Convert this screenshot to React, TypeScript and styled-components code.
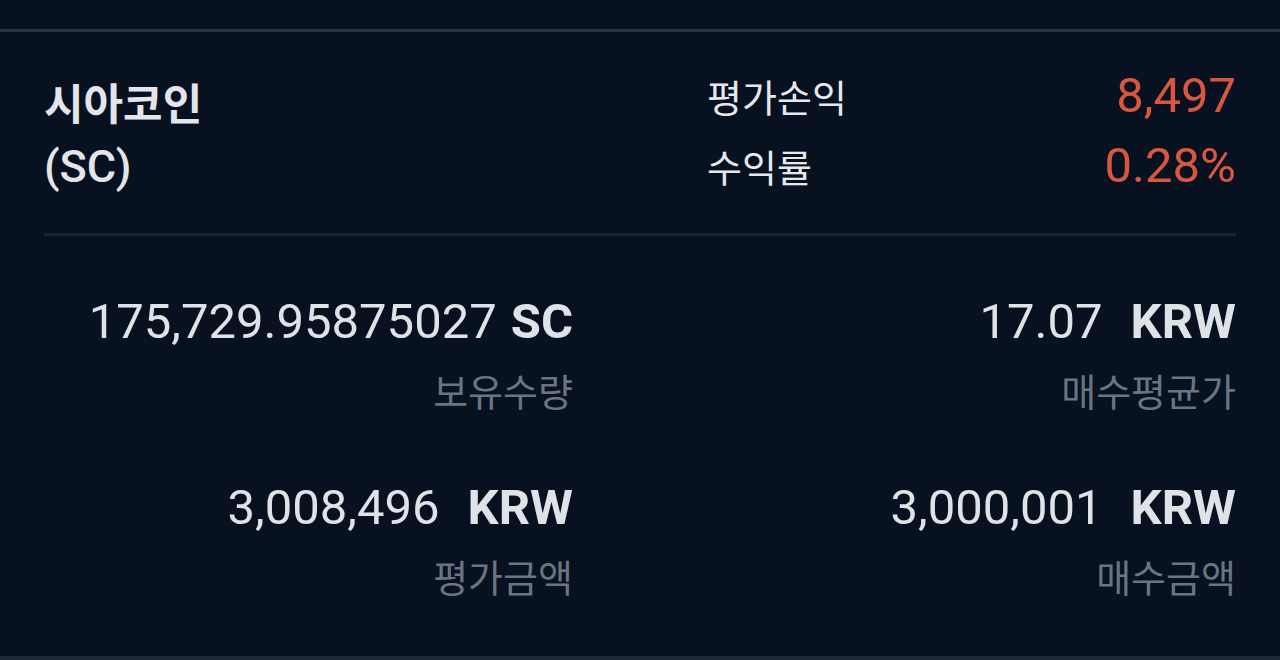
import React from 'react';
import styled, { createGlobalStyle } from 'styled-components';

const GlobalStyle = createGlobalStyle`
  html, body {
    margin: 0;
    padding: 0;
    background: #07111f;
  }
  body {
    font-family: Roboto, "Noto Sans CJK KR", sans-serif;
    -webkit-font-smoothing: antialiased;
  }
`;

type Holding = {
  value: string;
  unit: string;
  label: string;
  wide?: boolean;
};

const holdings: Holding[] = [
  { value: '175,729.95875027', unit: 'SC', label: '보유수량' },
  { value: '17.07', unit: 'KRW', label: '매수평균가', wide: true },
  { value: '3,008,496', unit: 'KRW', label: '평가금액', wide: true },
  { value: '3,000,001', unit: 'KRW', label: '매수금액', wide: true },
];

export default function App() {
  return (
    <>
      <GlobalStyle />
      <Screen>
        <TopBar />
        <Content>
          <Header>
            <CoinName>
              <KoName>시아코인</KoName>
              <Ticker>(SC)</Ticker>
            </CoinName>
            <Stats>
              <StatLabel>평가손익</StatLabel>
              <StatValue>8,497</StatValue>
              <StatLabel>수익률</StatLabel>
              <StatValue>0.28%</StatValue>
            </Stats>
          </Header>
          <Grid>
            {holdings.map((h) => (
              <Cell key={h.label}>
                <Amount>
                  {h.value}
                  <Unit wide={h.wide}>{h.unit}</Unit>
                </Amount>
                <CellLabel>{h.label}</CellLabel>
              </Cell>
            ))}
          </Grid>
        </Content>
      </Screen>
    </>
  );
}

const Screen = styled.div`
  height: 660px;
  display: flex;
  flex-direction: column;
  background: #07111f;
  border-bottom: 4px solid #1f2936;
  box-sizing: border-box;
  overflow: hidden;
`;

const TopBar = styled.div`
  height: 29px;
  flex-shrink: 0;
  border-bottom: 3px solid #283240;
`;

const Content = styled.div`
  flex: 1;
  padding: 0 44px;
`;

const Header = styled.div`
  display: grid;
  grid-template-columns: 1fr 1fr;
  column-gap: 134px;
  align-items: start;
  padding: 28px 0 33px;
  border-bottom: 3px solid #1a2431;
`;

const CoinName = styled.div`
  display: flex;
  flex-direction: column;
  padding-top: 14px;
  color: #e3e5ea;
`;

const KoName = styled.div`
  font-size: 43px;
  font-weight: 700;
  line-height: 62px;
`;

const Ticker = styled.div`
  font-size: 45px;
  font-weight: 500;
  line-height: 62px;
`;

const Stats = styled.div`
  display: grid;
  grid-template-columns: auto 1fr;
  grid-auto-rows: 70px;
  align-items: center;
`;

const StatLabel = styled.div`
  font-size: 38px;
  color: #e6e8ed;
`;

const StatValue = styled.div`
  text-align: right;
  font-size: 49px;
  color: #d9573f;
`;

const Grid = styled.div`
  display: grid;
  grid-template-columns: 1fr 1fr;
  column-gap: 134px;
  row-gap: 60px;
  padding-top: 56px;
`;

const Cell = styled.div`
  display: flex;
  flex-direction: column;
  align-items: flex-end;
`;

const Amount = styled.div`
  font-size: 49px;
  line-height: 60px;
  color: #dfe2e7;
  white-space: nowrap;
`;

const Unit = styled.span<{ wide?: boolean }>`
  font-weight: 700;
  margin-left: ${(p) => (p.wide ? '28px' : '14px')};
`;

const CellLabel = styled.div`
  margin-top: 16px;
  font-size: 38px;
  line-height: 50px;
  color: #6b7482;
`;
